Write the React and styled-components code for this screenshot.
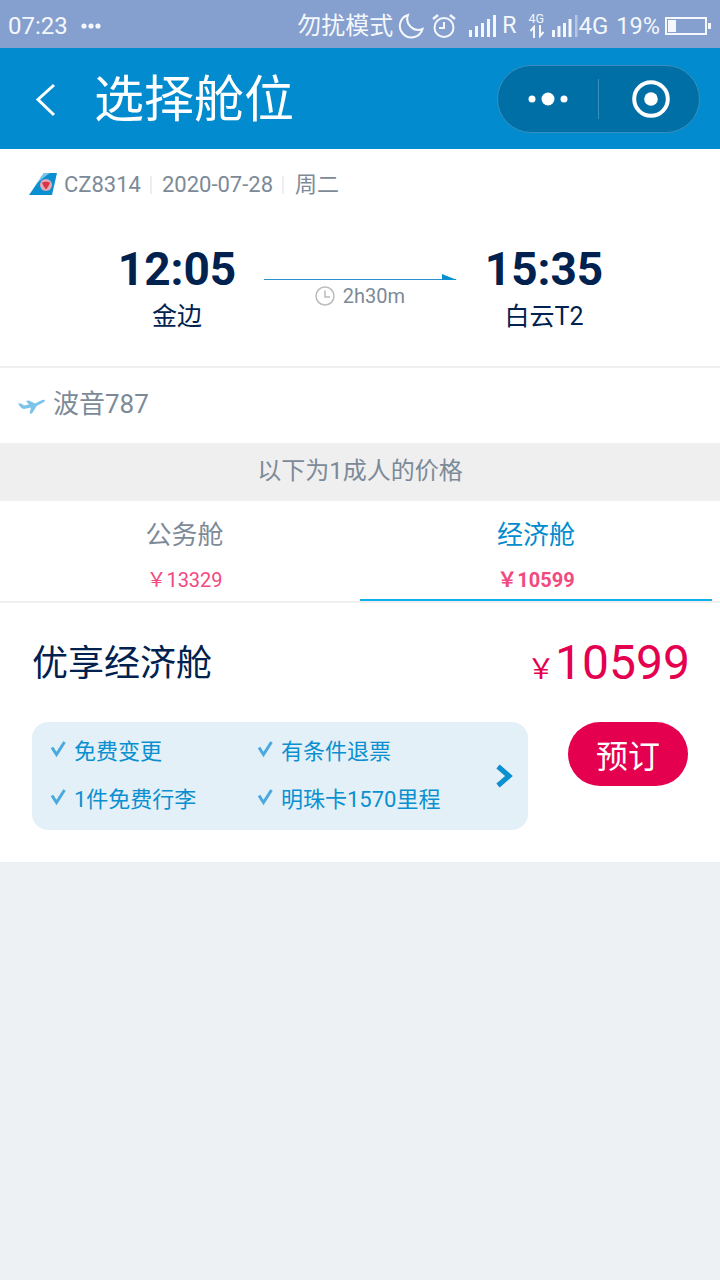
import React from "react";
import styled, { createGlobalStyle } from "styled-components";

const GlobalStyle = createGlobalStyle`
  html, body {
    margin: 0;
    padding: 0;
    background: #edf1f4;
    font-family: Roboto, "Noto Sans CJK SC", sans-serif;
  }
  * {
    box-sizing: border-box;
  }
`;

const Page = styled.div`
  width: 720px;
  height: 1280px;
  background: #edf1f4;
  overflow: hidden;
`;

const StatusBar = styled.div`
  height: 48px;
  background: #859fce;
  color: #f4f7fb;
  display: flex;
  align-items: center;
  justify-content: space-between;
  padding: 3px 9px 0 8px;
  font-size: 24px;
`;

const StatusGroup = styled.div`
  display: flex;
  align-items: center;
`;

const StatusText = styled.span`
  font-size: ${(props) => props.size || 24}px;
  margin-left: ${(props) => props.left || 0}px;
  line-height: 30px;
  white-space: nowrap;
`;

const StatusIcon = styled.svg`
  display: block;
  margin-left: ${(props) => props.left || 0}px;
  flex: none;
`;

const NetType = styled.div`
  width: 22px;
  margin-left: 12px;
  display: flex;
  flex-direction: column;
  font-size: 12.5px;
  line-height: 12px;
`;

const NavBar = styled.div`
  height: 101px;
  background: #028bcf;
  display: flex;
  align-items: center;
  padding: 0 20px 0 34px;
`;

const NavTitle = styled.div`
  color: #fff;
  font-size: 50px;
  line-height: 60px;
  margin: 3px 0 0 36px;
  flex: 1;
`;

const Capsule = styled.div`
  width: 203px;
  height: 68px;
  border-radius: 34px;
  background: #006fa6;
  border: 1px solid #3a8fbd;
  display: flex;
  align-items: center;
`;

const CapsuleSide = styled.div`
  width: 100px;
  height: 100%;
  display: flex;
  align-items: center;
  justify-content: center;
  padding-left: ${(props) => props.shift || 0}px;
`;

const CapsuleLine = styled.div`
  width: 1px;
  height: 40px;
  background: #3a8fbd;
`;

const FlightBlock = styled.div`
  height: 219px;
  background: #fff;
  border-bottom: 2px solid #efefef;
  padding-top: 19px;
`;

const FlightMeta = styled.div`
  display: flex;
  align-items: center;
  height: 32px;
  padding-left: 29px;
  color: #7c8a98;
  font-size: 22px;
`;

const MetaText = styled.span`
  margin-left: ${(props) => props.left || 0}px;
  line-height: 32px;
  padding-top: 1px;
`;

const MetaDivider = styled.span`
  width: 2px;
  height: 18px;
  background: #eceef0;
  margin: 2px 10px 0 9px;
`;

const Route = styled.div`
  display: flex;
  margin-top: 42px;
  padding-left: 118px;
`;

const Stop = styled.div`
  width: 118px;
  display: flex;
  flex-direction: column;
  align-items: center;
  color: #01214f;
`;

const StopTime = styled.div`
  font-size: 46px;
  font-weight: 700;
  line-height: 54px;
`;

const StopName = styled.div`
  font-size: 25px;
  line-height: 36px;
  margin-top: 3px;
`;

const Leg = styled.div`
  width: 194px;
  margin: 0 27px 0 28px;
  padding-top: 29px;
  display: flex;
  flex-direction: column;
  align-items: center;
`;

const Duration = styled.div`
  display: flex;
  align-items: center;
  gap: 8px;
  margin: 1px 2px 0 0;
  color: #7c8a98;
  font-size: 20px;
  line-height: 28px;
`;

const PlaneRow = styled.div`
  height: 75px;
  background: #fff;
  display: flex;
  align-items: center;
  padding-left: 18px;
  color: #7c8a98;
  font-size: 26px;
`;

const PlaneName = styled.span`
  margin-left: 7px;
  line-height: 36px;
  margin-bottom: 3px;
`;

const Notice = styled.div`
  height: 58px;
  background: #efefef;
  color: #7c8a98;
  font-size: 24px;
  display: flex;
  align-items: center;
  justify-content: center;
  padding-bottom: 7px;
`;

const Tabs = styled.div`
  height: 102px;
  background: #fff;
  border-bottom: 2px solid #efefef;
  display: grid;
  grid-template-columns: 360px 352px;
`;

const Tab = styled.div`
  height: 100px;
  display: flex;
  flex-direction: column;
  align-items: center;
  padding: 16px 0 0 ${(props) => (props.$active ? 0 : 9)}px;
  border-bottom: 2px solid ${(props) => (props.$active ? "#12b0e8" : "transparent")};
`;

const TabName = styled.div`
  font-size: 26px;
  line-height: 36px;
  color: ${(props) => (props.$active ? "#028bcf" : "#7c8a98")};
`;

const TabPrice = styled.div`
  font-size: 20px;
  line-height: 26px;
  margin-top: 14px;
  color: #f2497f;
  font-weight: ${(props) => (props.$active ? 700 : 400)};
`;

const CabinCard = styled.div`
  height: 259px;
  background: #fff;
  padding: 32px 30px 0 32px;
`;

const CabinHead = styled.div`
  display: flex;
  align-items: flex-start;
  justify-content: space-between;
  height: 56px;
`;

const CabinName = styled.div`
  color: #01214f;
  font-size: 36px;
  line-height: 56px;
  padding-top: 1px;
`;

const CabinPrice = styled.div`
  display: flex;
  align-items: baseline;
  color: #e4004f;
  font-size: 48px;
  line-height: 56px;
`;

const Yen = styled.span`
  font-size: 28px;
`;

const CabinBody = styled.div`
  display: flex;
  justify-content: space-between;
  align-items: flex-start;
  margin-top: 31px;
  padding-right: 2px;
`;

const Perks = styled.div`
  width: 496px;
  height: 108px;
  border-radius: 16px;
  background: #e3f0f7;
  display: flex;
  align-items: center;
  padding: 0 15px 0 18px;
`;

const PerkGrid = styled.div`
  display: grid;
  grid-template-columns: 207px 238px;
  grid-auto-rows: 48px;
  flex: none;
  margin-bottom: 7px;
`;

const Perk = styled.div`
  display: flex;
  align-items: center;
  gap: 8px;
  color: #0a8fd0;
  font-size: 22px;
  white-space: nowrap;
`;

const BookButton = styled.div`
  width: 120px;
  height: 64px;
  border-radius: 32px;
  background: #e4004f;
  color: #fff;
  font-size: 32px;
  display: flex;
  align-items: center;
  justify-content: center;
`;

const Check = () => (
  <svg width="16" height="18" viewBox="0 0 16 18">
    <path d="M2 7.500 L6.500 14.500 L14.500 2" fill="none" stroke="#4aa9df" strokeWidth="3" />
  </svg>
);

const perks = ["免费变更", "有条件退票", "1件免费行李", "明珠卡1570里程"];

const App = () => {
  return (
    <Page>
      <GlobalStyle />
      <StatusBar>
        <StatusGroup>
          <StatusText>07:23</StatusText>
          <StatusIcon left={13} width="20" height="6" viewBox="0 0 20 6">
            <circle cx="3" cy="3" r="2.6" fill="#f4f7fb" />
            <circle cx="10" cy="3" r="2.6" fill="#f4f7fb" />
            <circle cx="17" cy="3" r="2.6" fill="#f4f7fb" />
          </StatusIcon>
        </StatusGroup>
        <StatusGroup>
          <StatusText>勿扰模式</StatusText>
          <StatusIcon left={5} width="26" height="26" viewBox="0 0 26 26">
            <path d="M10 2 A11.500 11.500 0 1 0 24.500 16 A11 11 0 0 1 10 2 Z" fill="none" stroke="#f4f7fb" strokeWidth="2" />
          </StatusIcon>
          <StatusIcon left={8} width="24" height="26" viewBox="0 0 24 26">
            <circle cx="12" cy="14.500" r="9.500" fill="none" stroke="#f4f7fb" strokeWidth="2" />
            <path d="M12 9 V15 H7" fill="none" stroke="#f4f7fb" strokeWidth="2" />
            <path d="M1 6 L6 2 M23 6 L18 2" stroke="#f4f7fb" strokeWidth="2.400" />
          </StatusIcon>
          <StatusIcon left={12} width="28" height="24" viewBox="0 0 28 24">
            <path d="M1 16h3v7H1zM7 12h3v11H7zM13 9h3v14h-3zM19 5h3v18h-3zM25 1h3v22h-3z" fill="#f4f7fb" />
          </StatusIcon>
          <StatusText size={23} left={6}>R</StatusText>
          <NetType>
            4G
            <svg width="16" height="13" viewBox="0 0 16 13">
              <path d="M5 13 V2 L1.500 6 M11 0 V11 L14.500 7" stroke="#f4f7fb" strokeWidth="2" fill="none" />
            </svg>
          </NetType>
          <StatusIcon width="27" height="24" viewBox="0 0 27 24">
            <path d="M1 16h3v7H1zM6.500 12h3v11h-3zM12 9h3v14h-3zM17.500 5h3v18h-3z" fill="#f4f7fb" />
            <path d="M24 1h2.500v22H24z" fill="#f4f7fb" opacity="0.45" />
          </StatusIcon>
          <StatusText left={1}>4G</StatusText>
          <StatusText size={23.5} left={8}>19%</StatusText>
          <StatusIcon left={5} width="46" height="18" viewBox="0 0 46 18">
            <rect x="1" y="1" width="40" height="16" fill="none" stroke="#f4f7fb" strokeWidth="2" />
            <rect x="3" y="3" width="8" height="12" fill="#f4f7fb" />
            <rect x="43" y="6" width="3" height="6" fill="#f4f7fb" />
          </StatusIcon>
        </StatusGroup>
      </StatusBar>

      <NavBar>
        <svg width="24" height="40" viewBox="0 0 24 40">
          <path d="M20 6 L4 20.500 L20 36" fill="none" stroke="#fff" strokeWidth="3" />
        </svg>
        <NavTitle>选择舱位</NavTitle>
        <Capsule>
          <CapsuleSide>
            <svg width="40" height="14" viewBox="0 0 40 14">
              <circle cx="4" cy="7" r="3.500" fill="#fff" />
              <circle cx="20" cy="7" r="6.500" fill="#fff" />
              <circle cx="36" cy="7" r="3.500" fill="#fff" />
            </svg>
          </CapsuleSide>
          <CapsuleLine />
          <CapsuleSide shift={4}>
            <svg width="38" height="38" viewBox="0 0 38 38">
              <circle cx="19" cy="19" r="16.800" fill="none" stroke="#fff" strokeWidth="4" />
              <circle cx="19" cy="19" r="6.800" fill="#fff" />
            </svg>
          </CapsuleSide>
        </Capsule>
      </NavBar>

      <FlightBlock>
        <FlightMeta>
          <svg width="28" height="22" viewBox="0 0 28 22">
            <path d="M0 22 L15 0 H28 L23 22 Z" fill="#0a8fd0" />
            <path d="M15 0 H21 C15 4 8 10 6 13 Z" fill="#7cc3ea" />
            <circle cx="17" cy="12" r="6" fill="#e3a9b4" />
            <path d="M13 9.500 L17 8.500 L21 9.500 L19.500 13 L17 16.500 L14.500 13 Z" fill="#d8344a" />
          </svg>
          <MetaText left={7}>CZ8314</MetaText>
          <MetaDivider />
          <MetaText>2020-07-28</MetaText>
          <MetaDivider />
          <MetaText left={1}>周二</MetaText>
        </FlightMeta>
        <Route>
          <Stop>
            <StopTime>12:05</StopTime>
            <StopName>金边</StopName>
          </Stop>
          <Leg>
            <svg width="194" height="10" viewBox="0 0 194 10">
              <path d="M0 8.500 H192" stroke="#2c92cf" strokeWidth="1" />
              <path d="M178 3 L193 9 H178 Z" fill="#0a8fd0" />
            </svg>
            <Duration>
              <svg width="20" height="20" viewBox="0 0 20 20">
                <circle cx="10" cy="10" r="9" fill="none" stroke="#bbb" strokeWidth="1.500" />
                <path d="M10 4.500 V11 H15" fill="none" stroke="#bbb" strokeWidth="1.500" />
              </svg>
              2h30m
            </Duration>
          </Leg>
          <Stop>
            <StopTime>15:35</StopTime>
            <StopName>白云T2</StopName>
          </Stop>
        </Route>
      </FlightBlock>

      <PlaneRow>
        <svg width="28" height="18" viewBox="0 0 28 18">
          <path d="M0 6.500 L3 6.500 L6 8.500 L11 7.500 L8 4 L11 3.500 L17 6.500 L23 3.500 C25 2.800 27 2.500 27 3.500 C27 4.800 23 7 19 8.500 L14 16.500 L11.500 16.500 L13 10.500 L6 12 C4 12 2 9.500 0 6.500 Z" fill="#7cc3ea" />
        </svg>
        <PlaneName>波音787</PlaneName>
      </PlaneRow>

      <Notice>以下为1成人的价格</Notice>

      <Tabs>
        <Tab>
          <TabName>公务舱</TabName>
          <TabPrice>￥13329</TabPrice>
        </Tab>
        <Tab $active>
          <TabName $active>经济舱</TabName>
          <TabPrice $active>￥10599</TabPrice>
        </Tab>
      </Tabs>

      <CabinCard>
        <CabinHead>
          <CabinName>优享经济舱</CabinName>
          <CabinPrice>
            <Yen>￥</Yen>
            10599
          </CabinPrice>
        </CabinHead>
        <CabinBody>
          <Perks>
            <PerkGrid>
              {perks.map((perk) => (
                <Perk key={perk}>
                  <Check />
                  {perk}
                </Perk>
              ))}
            </PerkGrid>
            <svg width="18" height="24" viewBox="0 0 18 24">
              <path d="M3 2.500 L14 12 L3 21.500" fill="none" stroke="#0a8fd0" strokeWidth="5" />
            </svg>
          </Perks>
          <BookButton>预订</BookButton>
        </CabinBody>
      </CabinCard>
    </Page>
  );
};

export default App;
